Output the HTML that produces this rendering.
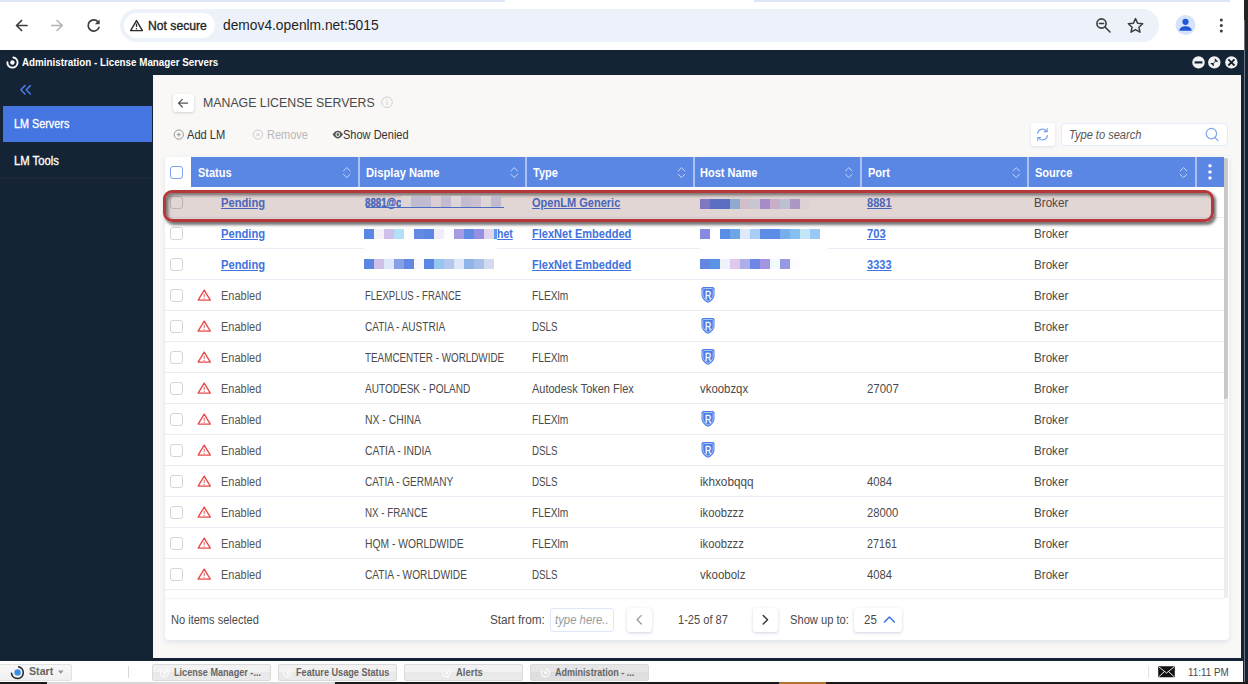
<!DOCTYPE html>
<html>
<head>
<meta charset="utf-8">
<title>Administration - License Manager Servers</title>
<style>
*{box-sizing:border-box;margin:0;padding:0}
html,body{width:1248px;height:684px;overflow:hidden;background:#fff;font-family:"Liberation Sans",sans-serif}
#root{position:relative;width:1248px;height:684px;overflow:hidden;background:#fff}
#root>div,#root>svg{position:absolute}
.tx{white-space:nowrap;line-height:1;transform-origin:0 50%}
.hd{top:157.3px;height:29.8px;background:#5b87e4}
.sep{top:157.3px;width:2px;height:29.8px;background:#a9c0f0}
.rl{left:164.6px;width:1059.2px;height:1px;background:#e9edf6}
.cb{left:170.3px;width:13.2px;height:13px;border:1.4px solid #d4d4d4;border-radius:3px;background:#fff}
.mz{height:10px}
.mz i{display:block;float:left;width:10px;height:10px}
.tb{top:664px;height:17px;border:1px solid #dadada;border-radius:2px;background:linear-gradient(#f2f2f2 0,#f2f2f2 50%,#e8e8e8 50%,#ebebeb 100%)}
.pb{top:607.5px;width:24.5px;height:24px;background:#fff;border-radius:3px;box-shadow:0 1px 3px rgba(60,80,140,.25)}

</style>
</head>
<body>
<div id="root">
<!-- BROWSER CHROME -->
<div style="left:0;top:0;width:1244px;height:50px;background:#fff"></div>
<div style="left:0;top:0;width:1230px;height:2px;background:#dfe6f7"></div>
<div style="left:505px;top:0;width:249px;height:2px;background:#fff"></div>
<div style="left:120px;top:8.8px;width:1039.4px;height:33.2px;border-radius:17px;background:#edf1fa"></div>
<div style="left:124px;top:13px;width:91px;height:25px;border-radius:13px;background:#fff"></div>
<svg style="left:0;top:0" width="1248" height="49" viewBox="0 0 1248 49">
  <g fill="none" stroke="#3c3c3c" stroke-width="1.7" stroke-linecap="round" stroke-linejoin="round">
    <path d="M27 25.5H16.7M21.6 20.5L16.5 25.5L21.6 30.5"/>
  </g>
  <g fill="none" stroke="#b4b4b4" stroke-width="1.7" stroke-linecap="round" stroke-linejoin="round">
    <path d="M51.7 25.5H62M57.1 20.5L62.2 25.5L57.1 30.5"/>
  </g>
  <g fill="none" stroke="#3c3c3c" stroke-width="1.7" stroke-linecap="round" stroke-linejoin="round">
    <path d="M98.3 22.2A5.6 5.6 0 1 0 99 27.5"/>
  </g>
  <path d="M99.6 19.4V24.2H94.8Z" fill="#3c3c3c"/>
  <path d="M136.5 20.6L142.4 30.6H130.6Z" fill="none" stroke="#2b2b2b" stroke-width="1.4" stroke-linejoin="round"/>
  <path d="M136.5 23.6V27" stroke="#2b2b2b" stroke-width="1.3"/>
  <circle cx="136.5" cy="28.7" r="0.8" fill="#2b2b2b"/>
  <g fill="none" stroke="#3c3c3c" stroke-width="1.6" stroke-linecap="round">
    <circle cx="1101.5" cy="23.5" r="4.6"/>
    <path d="M1105 27L1110 32"/>
    <path d="M1099.3 23.5H1103.7" stroke-width="1.3"/>
  </g>
  <path d="M1135.5 18.6L1137.6 23.3L1142.7 23.8L1138.9 27.2L1140 32.2L1135.5 29.6L1131 32.2L1132.1 27.2L1128.3 23.8L1133.4 23.3Z" fill="none" stroke="#3c3c3c" stroke-width="1.5" stroke-linejoin="round"/>
  <circle cx="1185.5" cy="25" r="10" fill="#d6e2fb"/>
  <circle cx="1185.5" cy="21.8" r="3.1" fill="#1f57d6"/>
  <path d="M1179.3 30.8C1179.3 27.4 1182.6 26.2 1185.5 26.2C1188.4 26.2 1191.7 27.4 1191.7 30.8Z" fill="#1f57d6"/>
  <circle cx="1221.3" cy="20.1" r="1.5" fill="#3c3c3c"/>
  <circle cx="1221.3" cy="25.6" r="1.5" fill="#3c3c3c"/>
  <circle cx="1221.3" cy="31.1" r="1.5" fill="#3c3c3c"/>
</svg>

<!-- APP FRAME -->
<div style="left:0;top:49.5px;width:1248px;height:634.5px;background:#152435"></div>
<div style="left:1244px;top:0;width:4px;height:50px;background:#232323"></div>
<div style="left:1244px;top:20px;width:1px;height:664px;background:#6f7680"></div>
<div style="left:152.5px;top:75px;width:1088px;height:583px;background:#f9f8f6"></div>
<div style="left:2.5px;top:105.5px;width:149.5px;height:36px;background:#4475e1"></div>
<div style="left:0;top:178px;width:152px;height:1px;background:#1c2a3c"></div>
<svg style="left:0;top:49px" width="160" height="60" viewBox="0 49 160 60">
  <!-- logo -->
  <circle cx="12.4" cy="62.5" r="2.2" fill="#fff"/>
  <path d="M13.4 57.5A5.1 5.1 0 1 1 7.4 62.2" fill="none" stroke="#fff" stroke-width="1.9" stroke-linecap="round"/>
  <!-- collapse -->
  <g fill="none" stroke="#4a7de6" stroke-width="1.5" stroke-linecap="round" stroke-linejoin="round">
    <path d="M25 85.6L20.8 89.8L25 94"/><path d="M30.4 85.6L26.2 89.8L30.4 94"/>
  </g>
</svg>
<svg style="left:1188px;top:52px" width="56" height="22" viewBox="1188 52 56 22">
  <circle cx="1198.5" cy="62.4" r="6.2" fill="#f2f2f2"/>
  <circle cx="1214.3" cy="62.4" r="6.2" fill="#f2f2f2"/>
  <circle cx="1231.4" cy="62.4" r="6.2" fill="#f2f2f2"/>
  <path d="M1194.6 62.4H1202.4" stroke="#152435" stroke-width="2.2"/>
  <path d="M1214.8 58.2L1218.4 61.8H1214.8Z M1213.8 66.6L1210.2 63H1213.8Z" fill="#152435"/>
  <path d="M1214.8 61.8L1213.8 63" stroke="#152435" stroke-width="1"/>
  <path d="M1228.3 59.3L1234.5 65.5M1234.5 59.3L1228.3 65.5" stroke="#152435" stroke-width="1.8"/>
</svg>

<!-- TITLE + TOOLBAR -->
<div style="left:172.5px;top:93.5px;width:21px;height:18px;background:#fff;border-radius:3px;box-shadow:0 1px 3px rgba(60,60,80,.22)"></div>
<svg style="left:170px;top:90px" width="240" height="56" viewBox="170 90 240 56">
  <g fill="none" stroke="#555" stroke-width="1.2" stroke-linecap="round" stroke-linejoin="round">
    <path d="M187.6 103.2H178.6M182.3 99.4L178.5 103.2L182.3 107"/>
  </g>
  <circle cx="387" cy="102.3" r="5.3" fill="none" stroke="#cfcfcf" stroke-width="1"/>
  <path d="M387 101.3V105.2" stroke="#cfcfcf" stroke-width="1.1"/><circle cx="387" cy="99.6" r="0.7" fill="#cfcfcf"/>
  <circle cx="178.8" cy="134.6" r="4.6" fill="none" stroke="#8c8c8c" stroke-width="0.9"/>
  <path d="M176.9 134.6H180.7M178.8 132.7V136.5" stroke="#8c8c8c" stroke-width="0.9"/>
  <circle cx="258" cy="134.6" r="4.6" fill="none" stroke="#c6c6c6" stroke-width="0.9"/>
  <path d="M256.5 133.1L259.5 136.1M259.5 133.1L256.5 136.1" stroke="#c6c6c6" stroke-width="0.9"/>
  <path d="M332.6 134.6C334.4 131.6 336.2 130.8 337.8 130.8C339.4 130.8 341.2 131.6 343 134.6C341.2 137.6 339.4 138.4 337.8 138.4C336.2 138.4 334.4 137.6 332.6 134.6Z" fill="#555"/>
  <circle cx="337.8" cy="134.6" r="2.3" fill="#f9f8f6"/><circle cx="337.8" cy="134.6" r="1.3" fill="#555"/>
</svg>
<div style="left:1030.5px;top:122.5px;width:24px;height:23.5px;background:#fff;border-radius:3px;box-shadow:0 1px 3px rgba(60,80,140,.14)"></div>
<div style="left:1061px;top:122.5px;width:167px;height:23.5px;background:#fff;border-radius:4px;border:1px solid #e4ebfb"></div>
<svg style="left:1030px;top:122px" width="200" height="26" viewBox="1030 122 200 26">
  <g fill="none" stroke="#6d9af0" stroke-width="1.05" stroke-linecap="round" stroke-linejoin="round">
    <path d="M1037.6 133.4A5 5 0 0 1 1046.6 131.2"/><path d="M1047.2 128.6V131.6H1044.2"/>
    <path d="M1047.4 135.6A5 5 0 0 1 1038.4 137.8"/><path d="M1037.8 140.4V137.4H1040.8"/>
  </g>
  <circle cx="1211.4" cy="133.6" r="5.2" fill="none" stroke="#7ea6f0" stroke-width="1.2"/>
  <path d="M1215.2 137.6L1218 140.6" stroke="#7ea6f0" stroke-width="1.3" stroke-linecap="round"/>
</svg>

<!-- CARD -->
<div style="left:164.5px;top:157.3px;width:1064px;height:482.7px;background:#fff;border-radius:4px;box-shadow:0 2px 5px rgba(90,110,170,.16)"></div>
<div style="left:1223.7px;top:157.5px;width:4.6px;height:440.5px;background:#eeeeee;border-radius:0 2px 2px 0"></div>
<div style="left:1223.7px;top:157.5px;width:4.6px;height:241.5px;background:#c9c9c9;border-radius:0 2px 2px 0"></div>
<div class="hd" style="left:191.2px;width:1032.5px"></div>
<div style="left:170.2px;top:165.8px;width:13px;height:13px;border:1.5px solid #7fa3ea;border-radius:3px;background:#fff"></div>
<div class="sep" style="left:357.9px"></div>
<div class="sep" style="left:525.3px"></div>
<div class="sep" style="left:692.6px"></div>
<div class="sep" style="left:859.9px"></div>
<div class="sep" style="left:1027.2px"></div>
<div class="sep" style="left:1194.6px"></div>
<svg style="left:190px;top:157px" width="1036" height="30" viewBox="190 157 1036 30"><g fill="none" stroke="#c9d8f7" stroke-width="1" stroke-linecap="round" stroke-linejoin="round"><path d="M343.5 170.9L346.8 167.7L350.1 170.9M343.5 174.3L346.8 177.5L350.1 174.3"/><path d="M510.9 170.9L514.2 167.7L517.5 170.9M510.9 174.3L514.2 177.5L517.5 174.3"/><path d="M678.2 170.9L681.5 167.7L684.8 170.9M678.2 174.3L681.5 177.5L684.8 174.3"/><path d="M845.5 170.9L848.8 167.7L852.1 170.9M845.5 174.3L848.8 177.5L852.1 174.3"/><path d="M1012.9 170.9L1016.2 167.7L1019.5 170.9M1012.9 174.3L1016.2 177.5L1019.5 174.3"/><path d="M1180.2 170.9L1183.5 167.7L1186.8 170.9M1180.2 174.3L1183.5 177.5L1186.8 174.3"/></g><rect x="1208.5" y="164.3" width="3" height="3" rx="0.8" fill="#fff"/><rect x="1208.5" y="170.5" width="3" height="3" rx="0.8" fill="#fff"/><rect x="1208.5" y="176.6" width="3" height="3" rx="0.8" fill="#fff"/></svg>
<div class="rl" style="top:217.3px"></div>
<div class="rl" style="top:248.3px"></div>
<div class="rl" style="top:279.3px"></div>
<div class="rl" style="top:310.3px"></div>
<div class="rl" style="top:341.3px"></div>
<div class="rl" style="top:372.3px"></div>
<div class="rl" style="top:403.3px"></div>
<div class="rl" style="top:434.3px"></div>
<div class="rl" style="top:465.3px"></div>
<div class="rl" style="top:496.3px"></div>
<div class="rl" style="top:527.3px"></div>
<div class="rl" style="top:558.3px"></div>
<div class="rl" style="top:589.3px"></div>
<div class="rl" style="top:590.5px;display:none"></div>
<div style="left:364px;top:224px;width:133px;height:30px;background:#fff"></div>
<div style="left:700px;top:224px;width:128px;height:30px;background:#fff"></div>
<div class="cb" style="top:196px"></div>
<div class="cb" style="top:227px"></div>
<div class="cb" style="top:258px"></div>
<div class="cb" style="top:289px"></div>
<div class="cb" style="top:320px"></div>
<div class="cb" style="top:351px"></div>
<div class="cb" style="top:382px"></div>
<div class="cb" style="top:413px"></div>
<div class="cb" style="top:444px"></div>
<div class="cb" style="top:475px"></div>
<div class="cb" style="top:506px"></div>
<div class="cb" style="top:537px"></div>
<div class="cb" style="top:568px"></div>
<svg style="left:190px;top:280px" width="540" height="310" viewBox="190 280 540 310"><g transform="translate(204.2 295.5)"><path d="M0 -5.4L6.1 4.6H-6.1Z" fill="#fff" stroke="#e84a4a" stroke-width="1.35" stroke-linejoin="round"/><path d="M0 -1.8V1.4" stroke="#ec6a6a" stroke-width="1.1"/><circle cx="0" cy="2.9" r="0.7" fill="#ec6a6a"/></g><g transform="translate(708 294.9)"><path d="M-5.2 -7.8H5.2L6.5 -6.4V-0.5C6.5 3.4 3.6 6.4 0 7.9C-3.6 6.4 -6.5 3.4 -6.5 -0.5V-6.4Z" fill="#4a7de6"/><path d="M-4.4 -6.4H4.4L5.2 -5.6V-0.5C5.2 2.6 2.9 5 0 6.3C-2.9 5 -5.2 2.6 -5.2 -0.5V-5.6Z" fill="none" stroke="#b4cbf7" stroke-width="0.9"/></g><g transform="translate(204.2 326.5)"><path d="M0 -5.4L6.1 4.6H-6.1Z" fill="#fff" stroke="#e84a4a" stroke-width="1.35" stroke-linejoin="round"/><path d="M0 -1.8V1.4" stroke="#ec6a6a" stroke-width="1.1"/><circle cx="0" cy="2.9" r="0.7" fill="#ec6a6a"/></g><g transform="translate(708 325.9)"><path d="M-5.2 -7.8H5.2L6.5 -6.4V-0.5C6.5 3.4 3.6 6.4 0 7.9C-3.6 6.4 -6.5 3.4 -6.5 -0.5V-6.4Z" fill="#4a7de6"/><path d="M-4.4 -6.4H4.4L5.2 -5.6V-0.5C5.2 2.6 2.9 5 0 6.3C-2.9 5 -5.2 2.6 -5.2 -0.5V-5.6Z" fill="none" stroke="#b4cbf7" stroke-width="0.9"/></g><g transform="translate(204.2 357.5)"><path d="M0 -5.4L6.1 4.6H-6.1Z" fill="#fff" stroke="#e84a4a" stroke-width="1.35" stroke-linejoin="round"/><path d="M0 -1.8V1.4" stroke="#ec6a6a" stroke-width="1.1"/><circle cx="0" cy="2.9" r="0.7" fill="#ec6a6a"/></g><g transform="translate(708 356.9)"><path d="M-5.2 -7.8H5.2L6.5 -6.4V-0.5C6.5 3.4 3.6 6.4 0 7.9C-3.6 6.4 -6.5 3.4 -6.5 -0.5V-6.4Z" fill="#4a7de6"/><path d="M-4.4 -6.4H4.4L5.2 -5.6V-0.5C5.2 2.6 2.9 5 0 6.3C-2.9 5 -5.2 2.6 -5.2 -0.5V-5.6Z" fill="none" stroke="#b4cbf7" stroke-width="0.9"/></g><g transform="translate(204.2 388.5)"><path d="M0 -5.4L6.1 4.6H-6.1Z" fill="#fff" stroke="#e84a4a" stroke-width="1.35" stroke-linejoin="round"/><path d="M0 -1.8V1.4" stroke="#ec6a6a" stroke-width="1.1"/><circle cx="0" cy="2.9" r="0.7" fill="#ec6a6a"/></g><g transform="translate(204.2 419.5)"><path d="M0 -5.4L6.1 4.6H-6.1Z" fill="#fff" stroke="#e84a4a" stroke-width="1.35" stroke-linejoin="round"/><path d="M0 -1.8V1.4" stroke="#ec6a6a" stroke-width="1.1"/><circle cx="0" cy="2.9" r="0.7" fill="#ec6a6a"/></g><g transform="translate(708 418.9)"><path d="M-5.2 -7.8H5.2L6.5 -6.4V-0.5C6.5 3.4 3.6 6.4 0 7.9C-3.6 6.4 -6.5 3.4 -6.5 -0.5V-6.4Z" fill="#4a7de6"/><path d="M-4.4 -6.4H4.4L5.2 -5.6V-0.5C5.2 2.6 2.9 5 0 6.3C-2.9 5 -5.2 2.6 -5.2 -0.5V-5.6Z" fill="none" stroke="#b4cbf7" stroke-width="0.9"/></g><g transform="translate(204.2 450.5)"><path d="M0 -5.4L6.1 4.6H-6.1Z" fill="#fff" stroke="#e84a4a" stroke-width="1.35" stroke-linejoin="round"/><path d="M0 -1.8V1.4" stroke="#ec6a6a" stroke-width="1.1"/><circle cx="0" cy="2.9" r="0.7" fill="#ec6a6a"/></g><g transform="translate(708 449.9)"><path d="M-5.2 -7.8H5.2L6.5 -6.4V-0.5C6.5 3.4 3.6 6.4 0 7.9C-3.6 6.4 -6.5 3.4 -6.5 -0.5V-6.4Z" fill="#4a7de6"/><path d="M-4.4 -6.4H4.4L5.2 -5.6V-0.5C5.2 2.6 2.9 5 0 6.3C-2.9 5 -5.2 2.6 -5.2 -0.5V-5.6Z" fill="none" stroke="#b4cbf7" stroke-width="0.9"/></g><g transform="translate(204.2 481.5)"><path d="M0 -5.4L6.1 4.6H-6.1Z" fill="#fff" stroke="#e84a4a" stroke-width="1.35" stroke-linejoin="round"/><path d="M0 -1.8V1.4" stroke="#ec6a6a" stroke-width="1.1"/><circle cx="0" cy="2.9" r="0.7" fill="#ec6a6a"/></g><g transform="translate(204.2 512.5)"><path d="M0 -5.4L6.1 4.6H-6.1Z" fill="#fff" stroke="#e84a4a" stroke-width="1.35" stroke-linejoin="round"/><path d="M0 -1.8V1.4" stroke="#ec6a6a" stroke-width="1.1"/><circle cx="0" cy="2.9" r="0.7" fill="#ec6a6a"/></g><g transform="translate(204.2 543.5)"><path d="M0 -5.4L6.1 4.6H-6.1Z" fill="#fff" stroke="#e84a4a" stroke-width="1.35" stroke-linejoin="round"/><path d="M0 -1.8V1.4" stroke="#ec6a6a" stroke-width="1.1"/><circle cx="0" cy="2.9" r="0.7" fill="#ec6a6a"/></g><g transform="translate(204.2 574.5)"><path d="M0 -5.4L6.1 4.6H-6.1Z" fill="#fff" stroke="#e84a4a" stroke-width="1.35" stroke-linejoin="round"/><path d="M0 -1.8V1.4" stroke="#ec6a6a" stroke-width="1.1"/><circle cx="0" cy="2.9" r="0.7" fill="#ec6a6a"/></g></svg>
<div class="mz" style="left:364px;top:229px;width:130px;height:10px"><i style="background:#5b87e4;height:10px"></i><i style="background:#f5f3f8;height:10px"></i><i style="background:#cfc0ea;height:10px"></i><i style="background:#b5e0f7;height:10px"></i><i style="background:#ffffff;height:10px"></i><i style="background:#628ae3;height:10px"></i><i style="background:#5b87e4;height:10px"></i><i style="background:#f0ecfa;height:10px"></i><i style="background:#fbfdfe;height:10px"></i><i style="background:#a59ce3;height:10px"></i><i style="background:#638be3;height:10px"></i><i style="background:#9690e2;height:10px"></i><i style="background:#e0d6ec;height:10px"></i></div>
<div class="mz" style="left:364px;top:259px;width:130px;height:10px"><i style="background:#5b87e4;height:10px"></i><i style="background:#cfc0ea;height:10px"></i><i style="background:#dce8f9;height:10px"></i><i style="background:#85a0e3;height:10px"></i><i style="background:#6487e3;height:10px"></i><i style="background:#faf8fd;height:10px"></i><i style="background:#5b87e4;height:10px"></i><i style="background:#98c6f3;height:10px"></i><i style="background:#b5c6f0;height:10px"></i><i style="background:#dce8f9;height:10px"></i><i style="background:#8fb4ea;height:10px"></i><i style="background:#a9c0ea;height:10px"></i><i style="background:#d3d9ee;height:10px"></i></div>
<div class="mz" style="left:700px;top:229px;width:120px;height:10px"><i style="background:#8789e3;height:10px"></i><i style="background:#ffffff;height:10px"></i><i style="background:#5b8de6;height:10px"></i><i style="background:#6da6e6;height:10px"></i><i style="background:#dceaf9;height:10px"></i><i style="background:#a9cdf3;height:10px"></i><i style="background:#5b8de6;height:10px"></i><i style="background:#5b8de6;height:10px"></i><i style="background:#78aeec;height:10px"></i><i style="background:#85c0f3;height:10px"></i><i style="background:#c5e5f9;height:10px"></i><i style="background:#98c9f5;height:10px"></i></div>
<div class="mz" style="left:700px;top:259px;width:100px;height:10px"><i style="background:#6487e3;height:10px"></i><i style="background:#5b93e6;height:10px"></i><i style="background:#eef3fb;height:10px"></i><i style="background:#e0c8ec;height:10px"></i><i style="background:#adb0e8;height:10px"></i><i style="background:#6f85e3;height:10px"></i><i style="background:#a394e3;height:10px"></i><i style="background:#f0fbfe;height:10px"></i><i style="background:#9698e3;height:10px"></i><i style="background:#fbfcfe;height:10px"></i></div>
<div style="left:165px;top:598.2px;width:1059px;height:1px;background:#f0f3f9"></div>

<!-- FOOTER -->
<div style="left:550px;top:607.5px;width:64.2px;height:24px;background:#fff;border:1px solid #dde6fa;border-radius:3px"></div>
<div class="pb" style="left:627px"></div>
<div class="pb" style="left:753px"></div>
<div class="pb" style="left:854px;width:48px"></div>
<svg style="left:620px;top:606px" width="290" height="28" viewBox="620 606 290 28">
  <path d="M641.4 615.4L637 619.7L641.4 624" fill="none" stroke="#9a9a9a" stroke-width="1.2" stroke-linecap="round" stroke-linejoin="round"/>
  <path d="M763.2 615.4L767.6 619.7L763.2 624" fill="none" stroke="#333" stroke-width="1.4" stroke-linecap="round" stroke-linejoin="round"/>
  <path d="M884.4 622L889.4 617L894.4 622" fill="none" stroke="#3f73e3" stroke-width="1.6" stroke-linecap="round" stroke-linejoin="round"/>
</svg>

<!-- TASKBAR -->
<div style="left:0;top:660.8px;width:1243.4px;height:21.4px;background:#fefefe"></div>
<div style="left:0;top:682.3px;width:1248px;height:2px;background:#1a1a1a"></div>
<div style="left:47.3px;top:682.3px;width:288px;height:2px;background:#d9d9d9"></div>
<div style="left:779px;top:682.3px;width:47px;height:2px;background:#b5722f"></div>
<div class="tb" style="left:-1px;width:72.5px;background:linear-gradient(#f8f8f8,#f0f0f0);border-color:#e2e2e2"></div>
<div style="left:128px;top:666px;width:1px;height:12px;background:#d8d8d8"></div>
<div class="tb" style="left:151.5px;width:119.5px"></div>
<div class="tb" style="left:277.5px;width:119.5px"></div>
<div class="tb" style="left:403.5px;width:119.5px"></div>
<div class="tb" style="left:529.5px;width:119.5px;background:linear-gradient(#e6e6e6 0,#e6e6e6 50%,#dedede 50%,#e0e0e0 100%)"></div>
<div style="left:1148px;top:666px;width:1px;height:12px;background:#e2e2e2"></div>
<svg style="left:0;top:661px" width="1248" height="22" viewBox="0 661 1248 22">
  <circle cx="17.6" cy="672.4" r="3.2" fill="#3b8ee6"/>
  <path d="M18.8 666.9A5.9 5.9 0 1 1 11.5 673.2" fill="none" stroke="#2a2a2a" stroke-width="1.6" stroke-linecap="round"/>
  <path d="M58 670.6H63.6L60.8 674Z" fill="#999"/>
  <g fill="none" stroke="#fbfbfb" stroke-width="1.3" stroke-linecap="round">
    <circle cx="164.6" cy="672.8" r="1.6" fill="#fbfbfb" stroke="none"/><path d="M161 670.6A4 4 0 1 0 165 668.8"/>
    <circle cx="287.6" cy="672.8" r="1.6" fill="#fbfbfb" stroke="none"/><path d="M284 670.6A4 4 0 1 0 288 668.8"/>
    <circle cx="446.6" cy="672.8" r="1.6" fill="#fbfbfb" stroke="none"/><path d="M443 670.6A4 4 0 1 0 447 668.8"/>
    <circle cx="545.6" cy="672.8" r="1.6" fill="#fbfbfb" stroke="none"/><path d="M542 670.6A4 4 0 1 0 546 668.8"/>
  </g>
  <rect x="1158.2" y="666.2" width="16.6" height="11" rx="1" fill="#111"/>
  <path d="M1159 667L1166.5 673L1174 667M1159 676.6L1164.4 671.6M1174 676.6L1168.6 671.6" fill="none" stroke="#fff" stroke-width="0.9"/>
</svg>

<!-- TEXT -->
<div class="tx" style="left:147.9px;top:19.72px;font-size:12.5px;color:#1f1f1f;-webkit-text-stroke:0.35px #1f1f1f;transform:scaleX(0.9743);">Not secure</div>
<div class="tx" style="left:223.3px;top:19.12px;font-size:13.8px;color:#1f1f1f;transform:scaleX(0.9992);">demov4.openlm.net:5015</div>
<div class="tx" style="left:21.8px;top:56.99px;font-size:11px;color:#fff;font-weight:bold;transform:scaleX(0.8920);">Administration - License Manager Servers</div>
<div class="tx" style="left:13.7px;top:118.14px;font-size:12px;color:#fff;-webkit-text-stroke:0.3px #fff;transform:scaleX(0.9012);">LM Servers</div>
<div class="tx" style="left:13.7px;top:155.44px;font-size:12px;color:#fff;-webkit-text-stroke:0.3px #fff;transform:scaleX(0.9412);">LM Tools</div>
<div class="tx" style="left:203.0px;top:96.29px;font-size:13.6px;color:#4a4a4a;transform:scaleX(0.9067);">MANAGE LICENSE SERVERS</div>
<div class="tx" style="left:187.2px;top:129.24px;font-size:12px;color:#333;transform:scaleX(0.9260);">Add LM</div>
<div class="tx" style="left:266.5px;top:129.24px;font-size:12px;color:#b9b9b9;transform:scaleX(0.9152);">Remove</div>
<div class="tx" style="left:343.2px;top:129.24px;font-size:12px;color:#333;transform:scaleX(0.9189);">Show Denied</div>
<div class="tx" style="left:1068.9px;top:129.04px;font-size:12px;color:#555;font-style:italic;transform:scaleX(0.9225);">Type to search</div>
<div class="tx" style="left:198.4px;top:167.04px;font-size:12px;color:#fff;font-weight:bold;transform:scaleX(0.9170);">Status</div>
<div class="tx" style="left:365.7px;top:167.04px;font-size:12px;color:#fff;font-weight:bold;transform:scaleX(0.9339);">Display Name</div>
<div class="tx" style="left:533.1px;top:167.04px;font-size:12px;color:#fff;font-weight:bold;transform:scaleX(0.9170);">Type</div>
<div class="tx" style="left:700.4px;top:167.04px;font-size:12px;color:#fff;font-weight:bold;transform:scaleX(0.9170);">Host Name</div>
<div class="tx" style="left:867.7px;top:167.04px;font-size:12px;color:#fff;font-weight:bold;transform:scaleX(0.9170);">Port</div>
<div class="tx" style="left:1035.1px;top:167.04px;font-size:12px;color:#fff;font-weight:bold;transform:scaleX(0.9170);">Source</div>
<div class="tx" style="left:221.2px;top:197.14px;font-size:12px;color:#4273de;font-weight:bold;text-decoration:underline;transform:scaleX(0.9315);">Pending</div>
<div class="tx" style="left:365.0px;top:197.14px;font-size:12px;color:#4273de;font-weight:bold;-webkit-text-stroke:0.4px #4273de;transform:scaleX(0.8097);">8881@c</div>
<div class="tx" style="left:532.1px;top:197.14px;font-size:12px;color:#4273de;font-weight:bold;text-decoration:underline;transform:scaleX(0.9195);">OpenLM Generic</div>
<div class="tx" style="left:867.2px;top:197.14px;font-size:12px;color:#4273de;font-weight:bold;text-decoration:underline;transform:scaleX(0.9212);">8881</div>
<div class="tx" style="left:1034.4px;top:197.14px;font-size:12px;color:#4a4a4a;transform:scaleX(0.9705);">Broker</div>
<div class="tx" style="left:221.2px;top:228.14px;font-size:12px;color:#4273de;font-weight:bold;text-decoration:underline;transform:scaleX(0.9315);">Pending</div>
<div class="tx" style="left:532.1px;top:228.14px;font-size:12px;color:#4273de;font-weight:bold;text-decoration:underline;transform:scaleX(0.9192);">FlexNet Embedded</div>
<div class="tx" style="left:867.2px;top:228.14px;font-size:12px;color:#4273de;font-weight:bold;text-decoration:underline;transform:scaleX(0.9335);">703</div>
<div class="tx" style="left:1034.4px;top:228.14px;font-size:12px;color:#4a4a4a;transform:scaleX(0.9705);">Broker</div>
<div class="tx" style="left:221.2px;top:259.14px;font-size:12px;color:#4273de;font-weight:bold;text-decoration:underline;transform:scaleX(0.9315);">Pending</div>
<div class="tx" style="left:532.1px;top:259.14px;font-size:12px;color:#4273de;font-weight:bold;text-decoration:underline;transform:scaleX(0.9192);">FlexNet Embedded</div>
<div class="tx" style="left:867.2px;top:259.14px;font-size:12px;color:#4273de;font-weight:bold;text-decoration:underline;transform:scaleX(0.9212);">3333</div>
<div class="tx" style="left:1034.4px;top:259.14px;font-size:12px;color:#4a4a4a;transform:scaleX(0.9705);">Broker</div>
<div class="tx" style="left:221.2px;top:290.14px;font-size:12px;color:#555;transform:scaleX(0.9149);">Enabled</div>
<div class="tx" style="left:365.0px;top:290.14px;font-size:12px;color:#4a4a4a;transform:scaleX(0.7927);">FLEXPLUS - FRANCE</div>
<div class="tx" style="left:532.1px;top:290.14px;font-size:12px;color:#4a4a4a;transform:scaleX(0.8504);">FLEXlm</div>
<div class="tx" style="left:1034.4px;top:290.14px;font-size:12px;color:#4a4a4a;transform:scaleX(0.9705);">Broker</div>
<div class="tx" style="left:221.2px;top:321.14px;font-size:12px;color:#555;transform:scaleX(0.9149);">Enabled</div>
<div class="tx" style="left:365.0px;top:321.14px;font-size:12px;color:#4a4a4a;transform:scaleX(0.8372);">CATIA - AUSTRIA</div>
<div class="tx" style="left:532.1px;top:321.14px;font-size:12px;color:#4a4a4a;transform:scaleX(0.8132);">DSLS</div>
<div class="tx" style="left:1034.4px;top:321.14px;font-size:12px;color:#4a4a4a;transform:scaleX(0.9705);">Broker</div>
<div class="tx" style="left:221.2px;top:352.14px;font-size:12px;color:#555;transform:scaleX(0.9149);">Enabled</div>
<div class="tx" style="left:365.0px;top:352.14px;font-size:12px;color:#4a4a4a;transform:scaleX(0.8214);">TEAMCENTER - WORLDWIDE</div>
<div class="tx" style="left:532.1px;top:352.14px;font-size:12px;color:#4a4a4a;transform:scaleX(0.8504);">FLEXlm</div>
<div class="tx" style="left:1034.4px;top:352.14px;font-size:12px;color:#4a4a4a;transform:scaleX(0.9705);">Broker</div>
<div class="tx" style="left:221.2px;top:383.14px;font-size:12px;color:#555;transform:scaleX(0.9149);">Enabled</div>
<div class="tx" style="left:365.0px;top:383.14px;font-size:12px;color:#4a4a4a;transform:scaleX(0.8370);">AUTODESK - POLAND</div>
<div class="tx" style="left:532.1px;top:383.14px;font-size:12px;color:#4a4a4a;transform:scaleX(0.9156);">Autodesk Token Flex</div>
<div class="tx" style="left:699.5px;top:383.14px;font-size:12px;color:#4a4a4a;transform:scaleX(0.9487);">vkoobzqx</div>
<div class="tx" style="left:867.2px;top:383.14px;font-size:12px;color:#4a4a4a;transform:scaleX(0.9528);">27007</div>
<div class="tx" style="left:1034.4px;top:383.14px;font-size:12px;color:#4a4a4a;transform:scaleX(0.9705);">Broker</div>
<div class="tx" style="left:221.2px;top:414.14px;font-size:12px;color:#555;transform:scaleX(0.9149);">Enabled</div>
<div class="tx" style="left:365.0px;top:414.14px;font-size:12px;color:#4a4a4a;transform:scaleX(0.8659);">NX - CHINA</div>
<div class="tx" style="left:532.1px;top:414.14px;font-size:12px;color:#4a4a4a;transform:scaleX(0.8504);">FLEXlm</div>
<div class="tx" style="left:1034.4px;top:414.14px;font-size:12px;color:#4a4a4a;transform:scaleX(0.9705);">Broker</div>
<div class="tx" style="left:221.2px;top:445.14px;font-size:12px;color:#555;transform:scaleX(0.9149);">Enabled</div>
<div class="tx" style="left:365.0px;top:445.14px;font-size:12px;color:#4a4a4a;transform:scaleX(0.8672);">CATIA - INDIA</div>
<div class="tx" style="left:532.1px;top:445.14px;font-size:12px;color:#4a4a4a;transform:scaleX(0.8132);">DSLS</div>
<div class="tx" style="left:1034.4px;top:445.14px;font-size:12px;color:#4a4a4a;transform:scaleX(0.9705);">Broker</div>
<div class="tx" style="left:221.2px;top:476.14px;font-size:12px;color:#555;transform:scaleX(0.9149);">Enabled</div>
<div class="tx" style="left:365.0px;top:476.14px;font-size:12px;color:#4a4a4a;transform:scaleX(0.8390);">CATIA - GERMANY</div>
<div class="tx" style="left:532.1px;top:476.14px;font-size:12px;color:#4a4a4a;transform:scaleX(0.8132);">DSLS</div>
<div class="tx" style="left:699.5px;top:476.14px;font-size:12px;color:#4a4a4a;transform:scaleX(0.9777);">ikhxobqqq</div>
<div class="tx" style="left:867.2px;top:476.14px;font-size:12px;color:#4a4a4a;transform:scaleX(0.9400);">4084</div>
<div class="tx" style="left:1034.4px;top:476.14px;font-size:12px;color:#4a4a4a;transform:scaleX(0.9705);">Broker</div>
<div class="tx" style="left:221.2px;top:507.14px;font-size:12px;color:#555;transform:scaleX(0.9149);">Enabled</div>
<div class="tx" style="left:365.0px;top:507.14px;font-size:12px;color:#4a4a4a;transform:scaleX(0.8152);">NX - FRANCE</div>
<div class="tx" style="left:532.1px;top:507.14px;font-size:12px;color:#4a4a4a;transform:scaleX(0.8504);">FLEXlm</div>
<div class="tx" style="left:699.5px;top:507.14px;font-size:12px;color:#4a4a4a;transform:scaleX(0.9382);">ikoobzzz</div>
<div class="tx" style="left:867.2px;top:507.14px;font-size:12px;color:#4a4a4a;transform:scaleX(0.9378);">28000</div>
<div class="tx" style="left:1034.4px;top:507.14px;font-size:12px;color:#4a4a4a;transform:scaleX(0.9705);">Broker</div>
<div class="tx" style="left:221.2px;top:538.14px;font-size:12px;color:#555;transform:scaleX(0.9149);">Enabled</div>
<div class="tx" style="left:365.0px;top:538.14px;font-size:12px;color:#4a4a4a;transform:scaleX(0.8591);">HQM - WORLDWIDE</div>
<div class="tx" style="left:532.1px;top:538.14px;font-size:12px;color:#4a4a4a;transform:scaleX(0.8504);">FLEXlm</div>
<div class="tx" style="left:699.5px;top:538.14px;font-size:12px;color:#4a4a4a;transform:scaleX(0.9382);">ikoobzzz</div>
<div class="tx" style="left:867.2px;top:538.14px;font-size:12px;color:#4a4a4a;transform:scaleX(0.8959);">27161</div>
<div class="tx" style="left:1034.4px;top:538.14px;font-size:12px;color:#4a4a4a;transform:scaleX(0.9705);">Broker</div>
<div class="tx" style="left:221.2px;top:569.14px;font-size:12px;color:#555;transform:scaleX(0.9149);">Enabled</div>
<div class="tx" style="left:365.0px;top:569.14px;font-size:12px;color:#4a4a4a;transform:scaleX(0.8460);">CATIA - WORLDWIDE</div>
<div class="tx" style="left:532.1px;top:569.14px;font-size:12px;color:#4a4a4a;transform:scaleX(0.8132);">DSLS</div>
<div class="tx" style="left:699.5px;top:569.14px;font-size:12px;color:#4a4a4a;transform:scaleX(0.9583);">vkoobolz</div>
<div class="tx" style="left:867.2px;top:569.14px;font-size:12px;color:#4a4a4a;transform:scaleX(0.9400);">4084</div>
<div class="tx" style="left:1034.4px;top:569.14px;font-size:12px;color:#4a4a4a;transform:scaleX(0.9705);">Broker</div>
<div class="tx" style="left:496.7px;top:228.14px;font-size:12px;color:#4273de;font-weight:bold;text-decoration:underline;transform:scaleX(0.8778);">het</div>
<div class="tx" style="left:170.9px;top:614.24px;font-size:12px;color:#4a4a4a;transform:scaleX(0.9206);">No items selected</div>
<div class="tx" style="left:489.7px;top:614.24px;font-size:12px;color:#4a4a4a;transform:scaleX(0.9783);">Start from:</div>
<div class="tx" style="left:554.7px;top:614.24px;font-size:12px;color:#9a9a9a;font-style:italic;transform:scaleX(0.9453);">type here..</div>
<div class="tx" style="left:677.6px;top:614.24px;font-size:12px;color:#4a4a4a;transform:scaleX(0.9233);">1-25 of 87</div>
<div class="tx" style="left:790.2px;top:614.24px;font-size:12px;color:#4a4a4a;transform:scaleX(0.9294);">Show up to:</div>
<div class="tx" style="left:864.1px;top:614.24px;font-size:12px;color:#4a4a4a;transform:scaleX(0.9581);">25</div>
<div class="tx" style="left:28.7px;top:666.37px;font-size:11.5px;color:#666;font-weight:bold;transform:scaleX(0.9274);">Start</div>
<div class="tx" style="left:173.5px;top:666.79px;font-size:11px;color:#666;font-weight:bold;transform:scaleX(0.8273);">License Manager -...</div>
<div class="tx" style="left:296.2px;top:666.79px;font-size:11px;color:#666;font-weight:bold;transform:scaleX(0.8294);">Feature Usage Status</div>
<div class="tx" style="left:455.7px;top:666.79px;font-size:11px;color:#666;font-weight:bold;transform:scaleX(0.8593);">Alerts</div>
<div class="tx" style="left:554.7px;top:666.79px;font-size:11px;color:#666;font-weight:bold;transform:scaleX(0.8212);">Administration - ...</div>
<div class="tx" style="left:1187.7px;top:666.79px;font-size:11px;color:#4a4a4a;transform:scaleX(0.8976);">11:11 PM</div>
<div class="tx" style="left:705.4px;top:290.11px;font-size:10.5px;color:#fff;-webkit-text-stroke:0.3px #fff;transform:scaleX(0.8296);">R</div>
<div class="tx" style="left:705.4px;top:321.11px;font-size:10.5px;color:#fff;-webkit-text-stroke:0.3px #fff;transform:scaleX(0.8296);">R</div>
<div class="tx" style="left:705.4px;top:352.11px;font-size:10.5px;color:#fff;-webkit-text-stroke:0.3px #fff;transform:scaleX(0.8296);">R</div>
<div class="tx" style="left:705.4px;top:414.11px;font-size:10.5px;color:#fff;-webkit-text-stroke:0.3px #fff;transform:scaleX(0.8296);">R</div>
<div class="tx" style="left:705.4px;top:445.11px;font-size:10.5px;color:#fff;-webkit-text-stroke:0.3px #fff;transform:scaleX(0.8296);">R</div>
<div style="left:163px;top:190px;width:1051px;height:31.5px;border:3px solid #b5373a;border-radius:9px;background:rgba(110,50,45,.2);box-shadow:2px 2.5px 3px rgba(0,0,0,.55), inset 2.5px 2.5px 3px rgba(0,0,0,.45)"></div>
<div class="mz" style="left:401px;top:195.5px;width:100px;height:11px"><i style="background:#ddd4d6;height:11px"></i><i style="background:#c0bccf;height:11px"></i><i style="background:#bfbbd0;height:11px"></i><i style="background:#dccdd2;height:11px"></i><i style="background:#c3bbd0;height:11px"></i><i style="background:#dcd6d8;height:11px"></i><i style="background:#c4bbd0;height:11px"></i><i style="background:#ccbfd0;height:11px"></i><i style="background:#e0d5d6;height:11px"></i><i style="background:#c0bbd0;height:11px"></i></div>
<div class="mz" style="left:700px;top:198.8px;width:110px;height:10px"><i style="background:#7f77c0;height:10px"></i><i style="background:#5a6fc2;height:10px"></i><i style="background:#5a6fc2;height:10px"></i><i style="background:#8faad0;height:10px"></i><i style="background:#d0bfca;height:10px"></i><i style="background:#c8c6d0;height:10px"></i><i style="background:#a78bc6;height:10px"></i><i style="background:#c8afc8;height:10px"></i><i style="background:#bcc0d0;height:10px"></i><i style="background:#ad98c4;height:10px"></i><i style="background:#dcd2d6;height:10px"></i></div>
<div style="left:365.5px;top:207.3px;width:138px;height:1.2px;background:#4a6cc4"></div>
<div style="left:494px;top:229px;width:3.4px;height:10px;background:#5b9be9"></div>
</div>
</body>
</html>
